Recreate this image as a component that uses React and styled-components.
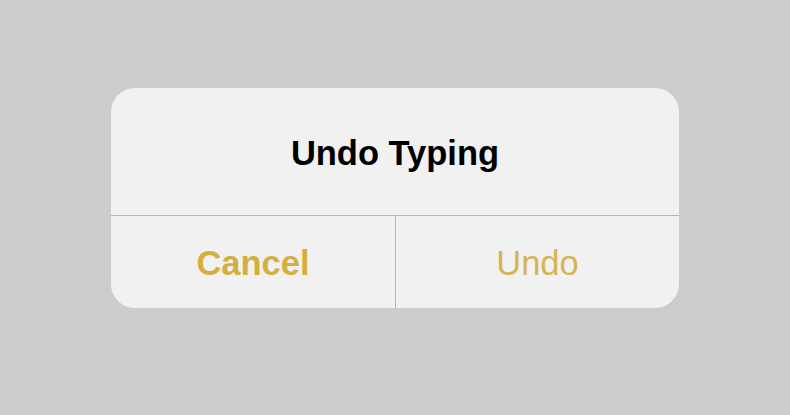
import React from 'react';
import styled, { createGlobalStyle } from 'styled-components';

const GlobalStyle = createGlobalStyle`
	html, body {
		margin: 0;
		background: #cccccc;
	}
`;

const Page = styled.div`
	width: 790px;
	height: 415px;
	display: flex;
	justify-content: center;
	align-items: flex-start;
	padding-top: 88px;
	box-sizing: border-box;
	font-family: 'Liberation Sans', Arial, sans-serif;
`;

const Dialog = styled.div`
	width: 568px;
	background: #f1f1f1;
	border-radius: 24px;
	overflow: hidden;
	display: flex;
	flex-direction: column;
`;

const Title = styled.h2`
	margin: 0;
	height: 128px;
	box-sizing: border-box;
	padding-top: 3px;
	display: flex;
	align-items: center;
	justify-content: center;
	font-size: 34.5px;
	font-weight: 700;
	color: #000;
	border-bottom: 1px solid #b5b5b5;
`;

const Actions = styled.div`
	display: grid;
	grid-template-columns: 1fr 1fr;
	height: 92px;
`;

const Action = styled.button`
	border: none;
	background: transparent;
	font-family: inherit;
	font-size: 34.5px;
	font-weight: ${(p) => (p.primary ? 700 : 400)};
	color: ${(p) => (p.primary ? '#d5ae40' : '#d7b44f')};
	padding: 2px 0 0;
	cursor: pointer;

	& + & {
		border-left: 1px solid #b5b5b5;
	}
`;

const App = () => (
	<>
		<GlobalStyle />
		<Page>
			<Dialog>
				<Title>Undo Typing</Title>
				<Actions>
					<Action primary>Cancel</Action>
					<Action>Undo</Action>
				</Actions>
			</Dialog>
		</Page>
	</>
);

export default App;
